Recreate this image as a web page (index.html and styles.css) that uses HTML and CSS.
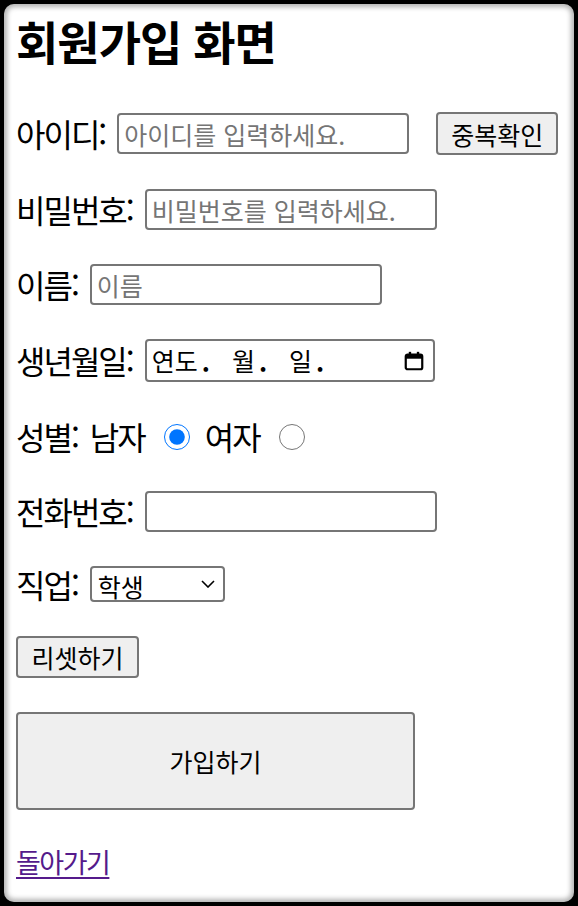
FILE: index.html
```html
<!DOCTYPE html>
<html lang="ko">
<head>
  <meta charset="UTF-8" />
  <meta name="viewport" content="width=device-width, initial-scale=1.0"/>
  <title>회원가입</title>
  <link rel="stylesheet" href="styles.css">
</head>
<body>
  <div class="page">
    <h1>회원가입 화면</h1>

    <form class="joinForm">
      <div class="row">
        <label for="userId">아이디:</label>
        <input type="text" id="userId" placeholder="아이디를 입력하세요.">
        <button type="button" class="checkBtn">중복확인</button>
      </div>

      <div class="row">
        <label for="userPw">비밀번호:</label>
        <input type="password" id="userPw" placeholder="비밀번호를 입력하세요.">
      </div>

      <div class="row">
        <label for="userName">이름:</label>
        <input type="text" id="userName" placeholder="이름">
      </div>

      <div class="row">
        <label>생년월일:</label>
        <div class="dateBox">
          <span>연도</span><span class="dot">.</span>
          <span>월</span><span class="dot">.</span>
          <span>일</span><span class="dot">.</span>
          <svg class="calIcon" viewBox="0 0 24 24" width="22" height="22">
            <rect x="3" y="5" width="18" height="16" rx="2" fill="none" stroke="#000" stroke-width="2.4"/>
            <rect x="3" y="5" width="18" height="4.5" fill="#000"/>
            <rect x="6.3" y="2" width="2.6" height="4" fill="#000"/>
            <rect x="15.1" y="2" width="2.6" height="4" fill="#000"/>
          </svg>
        </div>
      </div>

      <div class="row">
        <label>성별:</label>
        <span class="optText">남자</span>
        <input type="radio" name="gender" class="radio" checked>
        <span class="optText">여자</span>
        <input type="radio" name="gender" class="radio">
      </div>

      <div class="row">
        <label for="phone">전화번호:</label>
        <input type="text" id="phone">
      </div>

      <div class="row jobRow">
        <label for="job">직업:</label>
        <span class="selectWrap">
          <select id="job" class="jobSelect">
            <option>학생</option>
            <option>회사원</option>
            <option>기타</option>
          </select>
          <svg class="selectArrow" viewBox="0 0 14 8" width="14" height="8">
            <polyline points="1,1 7,7 13,1" fill="none" stroke="#000" stroke-width="1.6"/>
          </svg>
        </span>
      </div>

      <div class="row">
        <button type="reset" class="resetBtn">리셋하기</button>
      </div>

      <div class="row">
        <button type="submit" class="submitBtn">가입하기</button>
      </div>

      <div class="row linkRow">
        <a href="#" class="backLink">돌아가기</a>
      </div>
    </form>
  </div>
</body>
</html>
```

FILE: styles.css
```css
html, body {
  margin: 0;
  background-color: #000;
  font-family: "Noto Sans CJK KR", "Noto Sans", sans-serif;
}

.page {
  margin: 4px;
  height: 898px;
  box-sizing: border-box;
  padding: 10px 12px 0 12px;
  background-color: #fff;
  border-radius: 10px;
  box-shadow: inset 0 0 5px 3px rgba(0, 0, 0, 0.3);
}

h1 {
  margin: 0 0 46px 0;
  font-size: 46px;
  line-height: 52px;
  font-weight: 700;
  letter-spacing: -1px;
  color: #000;
}

.joinForm {
  display: flex;
  flex-direction: column;
  gap: 34px;
}

.row {
  display: flex;
  align-items: center;
  gap: 12px;
  font-size: 32px;
  letter-spacing: -2px;
  line-height: 41px;
  color: #000;
}

input[type="text"],
input[type="password"] {
  width: 292px;
  height: 41px;
  box-sizing: border-box;
  margin: 0;
  padding: 0 5px;
  border: 2px solid #767676;
  border-radius: 4px;
  font-family: inherit;
  font-size: 25px;
  letter-spacing: 0;
  color: #000;
}

input::placeholder {
  color: #757575;
}

button {
  margin: 0;
  box-sizing: border-box;
  background-color: #efefef;
  border: 2px solid #767676;
  border-radius: 4px;
  font-family: inherit;
  font-size: 25px;
  letter-spacing: 0;
  color: #000;
  padding: 0;
}

.checkBtn {
  margin-left: 15px;
  width: 122px;
  height: 43px;
}

.dateBox {
  width: 290px;
  height: 43px;
  box-sizing: border-box;
  border: 2px solid #767676;
  border-radius: 4px;
  display: flex;
  align-items: center;
  padding: 0 8px 0 5px;
  font-size: 25px;
  letter-spacing: 0;
}

.dateBox .dot {
  font-weight: 700;
  margin: 0 22px 0 4px;
}

.calIcon {
  margin-left: auto;
}

.optText {
  margin-right: 7px;
}

.radio {
  width: 26px;
  height: 26px;
  margin: 0 3px 0 0;
}

.jobRow {
  line-height: 36px;
}

.selectWrap {
  position: relative;
  display: inline-flex;
}

.jobSelect {
  appearance: none;
  width: 135px;
  height: 36px;
  box-sizing: border-box;
  margin: 0;
  border: 2px solid #767676;
  border-radius: 4px;
  background-color: #fff;
  font-family: inherit;
  font-size: 25px;
  letter-spacing: 0;
  padding: 0 6px;
  color: #000;
}

.selectArrow {
  position: absolute;
  right: 10px;
  top: 14px;
  pointer-events: none;
}

.resetBtn {
  width: 123px;
  height: 42px;
}

.submitBtn {
  width: 399px;
  height: 98px;
}

.linkRow {
  font-size: 27px;
  letter-spacing: -1.5px;
  line-height: 36px;
}

.backLink {
  color: #551a8b;
  text-decoration-thickness: 2px;
  text-underline-offset: 4px;
}
```
